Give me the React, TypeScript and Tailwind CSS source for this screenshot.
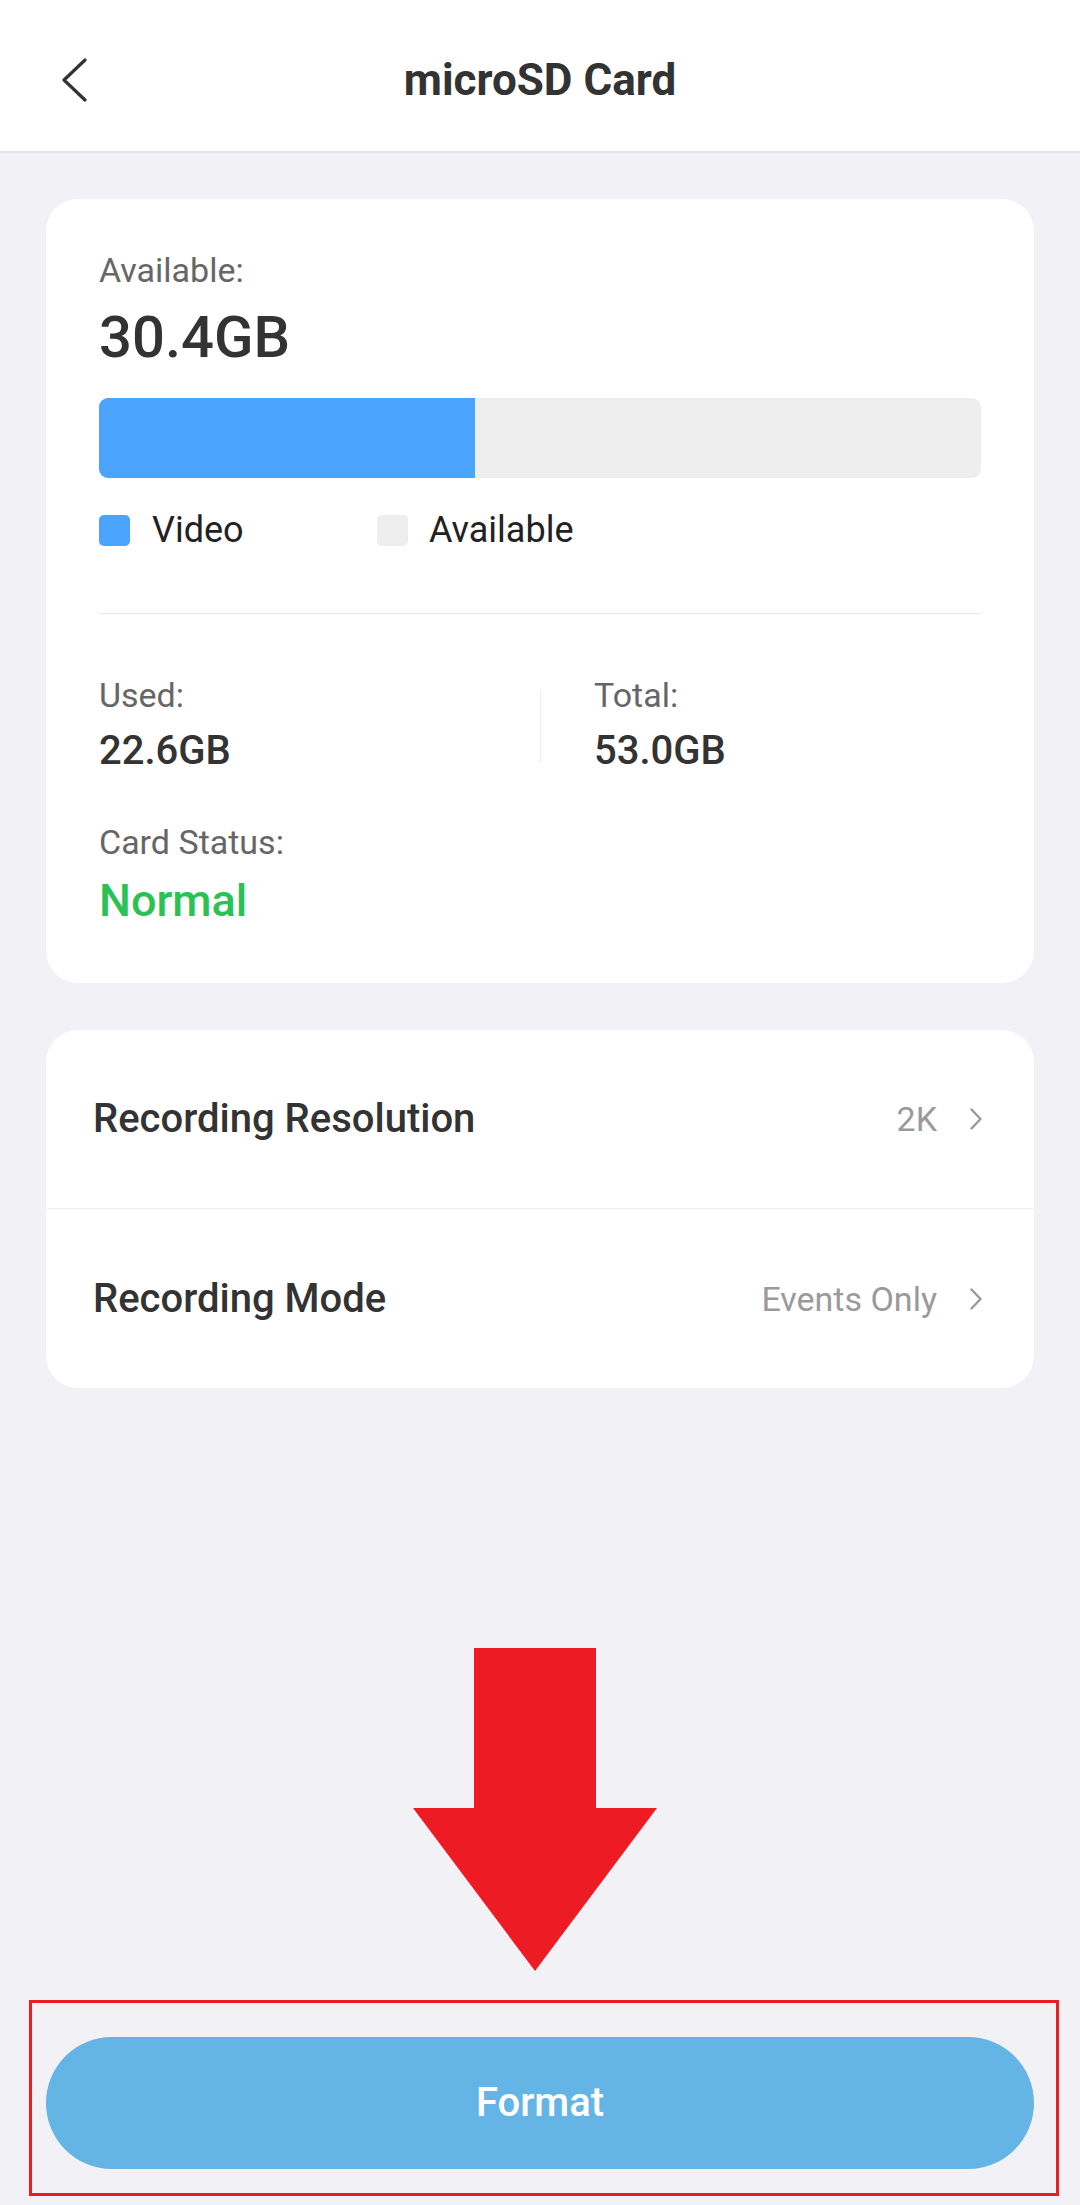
const font = { fontFamily: 'Roboto, "Noto Sans", sans-serif' };

const Chevron = () => (
  <svg className="ml-[33px]" width="12" height="22" viewBox="0 0 12 22" fill="none">
    <polyline points="1.5,1.5 10.5,11 1.5,20.5" stroke="#9a9a9a" strokeWidth="2.4" strokeLinecap="round" strokeLinejoin="round" />
  </svg>
);

const SettingRow = ({ label, value, last }: { label: string; value: string; last?: boolean }) => (
  <div
    className={`flex h-[179px] items-center pl-[47px] pr-[52px] ${last ? '' : 'border-b border-[#eeeeee]'}`}
  >
    <span className="flex-1 text-[40px] font-medium leading-[48px] text-[#333333]">{label}</span>
    <span className="text-[34px] leading-[40px] text-[#9a9a9a]">{value}</span>
    <Chevron />
  </div>
);

export default function App() {
  return (
    <div className="relative flex h-[2205px] w-[1080px] flex-col bg-[#f1f1f6]" style={font}>
      {/* header */}
      <header className="relative flex h-[153px] shrink-0 items-center justify-center border-b-2 border-[#e3e3e8] bg-white pt-[8px]">
        <svg className="absolute left-[61px] top-[58px]" width="27" height="44" viewBox="0 0 27 44" fill="none">
          <polyline points="24,2 3,22 24,42" stroke="#333333" strokeWidth="3.2" strokeLinecap="round" strokeLinejoin="round" />
        </svg>
        <h1 className="text-[44px] font-bold leading-[52px] text-[#333333]">microSD Card</h1>
      </header>

      <main className="flex flex-1 flex-col px-[46px] pt-[46px]">
        {/* storage card */}
        <section className="rounded-[32px] bg-white px-[53px] pb-[55px] pt-[51px]">
          <p className="text-[34px] leading-[40px] text-[#666666]">Available:</p>
          <p className="mt-[13px] text-[58px] font-medium leading-[68px] text-[#333333]">30.4GB</p>

          <div className="mt-[27px] flex h-[80px] overflow-hidden rounded-[9px] bg-[#eeeeee]">
            <div className="h-full bg-[#4aa3fc]" style={{ width: `${(22.6 / 53.0) * 100}%` }} />
          </div>

          <div className="mt-[30px] flex h-[44px] items-center">
            <span className="h-[31px] w-[31px] rounded-[5px] bg-[#4aa3fc]" />
            <span className="ml-[22px] w-[225px] text-[36px] leading-[44px] text-[#222222]">Video</span>
            <span className="h-[31px] w-[31px] rounded-[5px] bg-[#eeeeee]" />
            <span className="ml-[21px] text-[36px] leading-[44px] text-[#222222]">Available</span>
          </div>

          <div className="mt-[61px] h-px bg-[#e8e8e8]" />

          <div className="mt-[61px] flex">
            <div className="w-[441px]">
              <p className="text-[34px] leading-[40px] text-[#666666]">Used:</p>
              <p className="mt-[12px] text-[40px] font-medium leading-[48px] text-[#333333]">22.6GB</p>
            </div>
            <div className="mt-[15px] h-[73px] w-px bg-[#ebebeb]" />
            <div className="pl-[53px]">
              <p className="text-[34px] leading-[40px] text-[#666666]">Total:</p>
              <p className="mt-[12px] text-[40px] font-medium leading-[48px] text-[#333333]">53.0GB</p>
            </div>
          </div>

          <p className="mt-[47px] text-[34px] leading-[40px] text-[#666666]">Card Status:</p>
          <p className="mt-[12px] text-[45px] font-medium leading-[54px] text-[#2bc255]">Normal</p>
        </section>

        {/* recording settings */}
        <section className="mt-[47px] overflow-hidden rounded-[32px] bg-white">
          <SettingRow label="Recording Resolution" value="2K" />
          <SettingRow label="Recording Mode" value="Events Only" last />
        </section>

        <div className="flex-1" />

        <button className="mb-[36px] h-[132px] w-full rounded-full bg-[#64b5e5] text-[40px] font-medium text-white">
          Format
        </button>
      </main>

      {/* annotation overlay */}
      <svg
        className="pointer-events-none absolute left-[413px] top-[1648px]"
        width="244"
        height="323"
        viewBox="0 0 244 323"
      >
        <polygon points="61,0 183,0 183,160 244,160 122,323 0,160 61,160" fill="#ed1c24" />
      </svg>
      <div className="pointer-events-none absolute left-[29px] top-[2000px] h-[196px] w-[1030px] border-[3px] border-[#ed1c24]" />
    </div>
  );
}
